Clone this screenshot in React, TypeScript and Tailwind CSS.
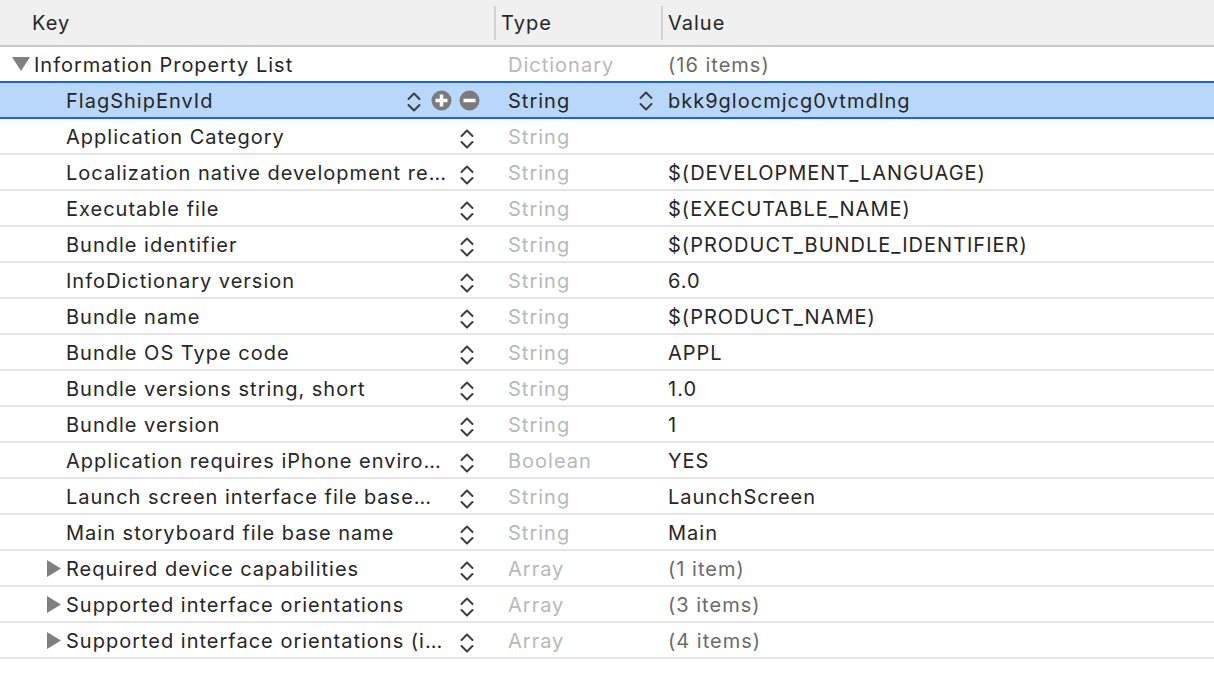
import React from "react";

type Row = {
  key: string;
  type: string;
  value: string;
  level: number;
  expander?: "down" | "right";
  valueMuted?: boolean;
  selected?: boolean;
};

const rows: Row[] = [
  { key: "Information Property List", type: "Dictionary", value: "(16 items)", level: 0, expander: "down", valueMuted: true },
  { key: "FlagShipEnvId", type: "String", value: "bkk9glocmjcg0vtmdlng", level: 1, selected: true },
  { key: "Application Category", type: "String", value: "", level: 1 },
  { key: "Localization native development re…", type: "String", value: "$(DEVELOPMENT_LANGUAGE)", level: 1 },
  { key: "Executable file", type: "String", value: "$(EXECUTABLE_NAME)", level: 1 },
  { key: "Bundle identifier", type: "String", value: "$(PRODUCT_BUNDLE_IDENTIFIER)", level: 1 },
  { key: "InfoDictionary version", type: "String", value: "6.0", level: 1 },
  { key: "Bundle name", type: "String", value: "$(PRODUCT_NAME)", level: 1 },
  { key: "Bundle OS Type code", type: "String", value: "APPL", level: 1 },
  { key: "Bundle versions string, short", type: "String", value: "1.0", level: 1 },
  { key: "Bundle version", type: "String", value: "1", level: 1 },
  { key: "Application requires iPhone enviro…", type: "Boolean", value: "YES", level: 1 },
  { key: "Launch screen interface file base…", type: "String", value: "LaunchScreen", level: 1 },
  { key: "Main storyboard file base name", type: "String", value: "Main", level: 1 },
  { key: "Required device capabilities", type: "Array", value: "(1 item)", level: 1, expander: "right", valueMuted: true },
  { key: "Supported interface orientations", type: "Array", value: "(3 items)", level: 1, expander: "right", valueMuted: true },
  { key: "Supported interface orientations (i…", type: "Array", value: "(4 items)", level: 1, expander: "right", valueMuted: true },
];

function Stepper() {
  return (
    <svg width="16" height="22" viewBox="0 0 16 22" className="shrink-0">
      <path d="M2.5 8 L8 2.5 L13.5 8" fill="none" stroke="#3d3d3d" strokeWidth="2" strokeLinecap="round" strokeLinejoin="round" />
      <path d="M2.5 14 L8 19.5 L13.5 14" fill="none" stroke="#3d3d3d" strokeWidth="2" strokeLinecap="round" strokeLinejoin="round" />
    </svg>
  );
}

function CircleBtn({ plus }: { plus?: boolean }) {
  return (
    <svg width="21" height="21" viewBox="0 0 21 21" className="shrink-0">
      <circle cx="10.5" cy="10.5" r="10" fill="#7b7b7b" />
      <rect x="4.5" y="8.75" width="12" height="3.5" fill="#ffffff" />
      {plus && <rect x="8.75" y="4.5" width="3.5" height="12" fill="#ffffff" />}
    </svg>
  );
}

function Triangle({ dir }: { dir: "down" | "right" }) {
  if (dir === "down") {
    return (
      <svg width="18" height="16" viewBox="0 0 18 16" className="shrink-0">
        <path d="M0 1 L18 1 L9 15 Z" fill="#808080" />
      </svg>
    );
  }
  return (
    <svg width="15" height="17" viewBox="0 0 15 17" className="shrink-0">
      <path d="M1 0 L15 8.5 L1 17 Z" fill="#808080" />
    </svg>
  );
}

export default function App() {
  return (
    <div
      className="w-[1214px] h-[682px] bg-white overflow-hidden text-[20px] tracking-[1px] text-[#262626]"
      style={{ fontFamily: 'Inter, "Liberation Sans", Arial, sans-serif' }}
    >
      {/* Header */}
      <div className="flex h-[47px] bg-[#f0f0f0] border-b-2 border-[#c9c9c9]">
        <div className="w-[494px] flex items-center pl-[32px]">Key</div>
        <div className="w-[167px] flex items-center">
          <div className="w-[2px] h-[34px] bg-[#d3d3d3] mt-[1px]" />
          <span className="pl-[5px]">Type</span>
        </div>
        <div className="flex-1 flex items-center">
          <div className="w-[2px] h-[34px] bg-[#d3d3d3] mt-[1px]" />
          <span className="pl-[5px]">Value</span>
        </div>
      </div>

      {rows.map((r, i) => {
        const nextSelected = rows[i + 1]?.selected;
        const borderCls = r.selected || nextSelected ? "border-[#1a68d8]" : "border-[#e4e4e4]";
        return (
          <div
            key={i}
            className={`flex h-[36px] border-b-2 ${borderCls} ${r.selected ? "bg-[#b9d7fb]" : ""}`}
          >
            {/* Key column */}
            <div className="w-[494px] flex items-center">
              <div className={`${r.level === 0 ? "w-[34px] pl-[12px]" : "w-[66px] pl-[46px]"} flex items-center shrink-0`}>
                {r.expander && <Triangle dir={r.expander} />}
              </div>
              <span className="whitespace-nowrap overflow-hidden pt-[2px]">{r.key}</span>
              <div className="flex-1" />
              {r.level > 0 &&
                (r.selected ? (
                  <div className="flex items-center pr-[14px] gap-[7px]">
                    <div className="mt-[4px] mr-[2px]"><Stepper /></div>
                    <CircleBtn plus />
                    <CircleBtn />
                  </div>
                ) : (
                  <div className="pr-[19px] mt-[6px]">
                    <Stepper />
                  </div>
                ))}
            </div>
            {/* Type column */}
            <div className="w-[167px] flex items-center pl-[14px]">
              <span className={`pt-[2px] ${r.selected ? "text-[#262626]" : "text-[#b8b8b8]"}`}>{r.type}</span>
              <div className="flex-1" />
              {r.selected && (
                <div className="pr-[7px] mt-[2px]">
                  <Stepper />
                </div>
              )}
            </div>
            {/* Value column */}
            <div className="flex-1 flex items-center pl-[7px]">
              <span className={`pt-[2px] ${r.valueMuted ? "text-[#6b6b6b]" : "text-[#262626]"}`}>{r.value}</span>
            </div>
          </div>
        );
      })}
    </div>
  );
}
